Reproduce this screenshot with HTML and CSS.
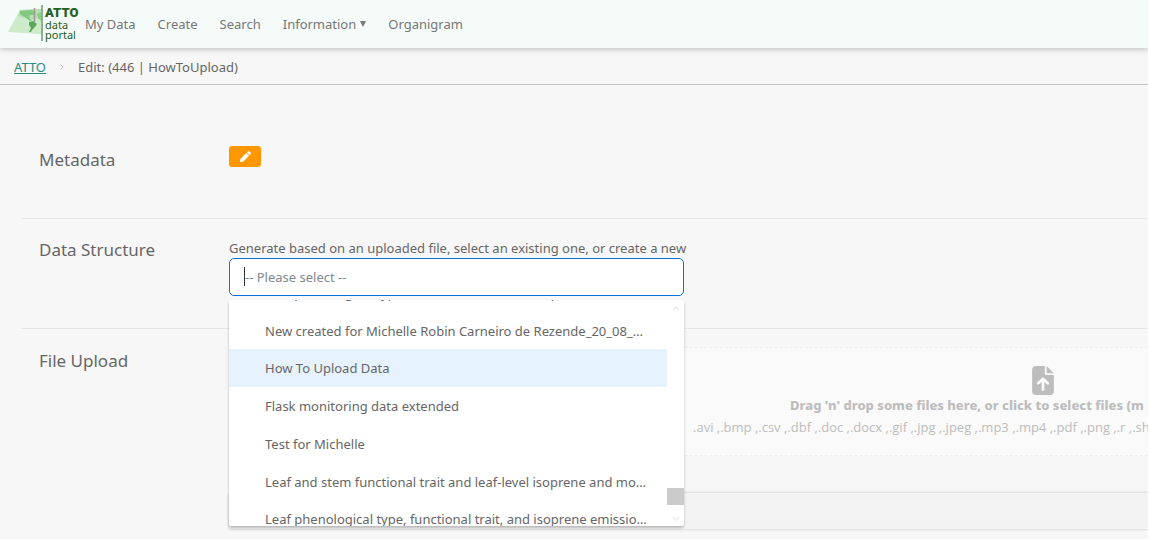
FILE: index.html
```html
<!DOCTYPE html>
<html lang="en">
<head>
<meta charset="utf-8">
<title>ATTO data portal - Edit</title>
<link rel="stylesheet" href="styles.css">
</head>
<body>
<div class="page">
  <header class="navbar">
    <a class="brand" href="#" aria-label="ATTO data portal">
      <svg class="brand-map" viewBox="0 0 36 38" aria-hidden="true">
        <path d="M12 5 33 4V29L0 27Z" fill="#cdebca"/>
        <path d="M12 5 33 4V12L24 15 10 11Z" fill="#b5dfb2"/>
        <path d="M12 6 24 5 28 8 25 10 22 10 21 13 24 15 22 16 18 13 12 9Z" fill="#84c880"/>
        <path d="M21 17 25 16 29 19 27 22 24 25 23 27 21 27 23 23 21 20Z" fill="#5aa85a"/>
        <path d="M29 9 33 7V16L30 13Z" fill="#8ccd88"/>
        <path d="M26.500 3V17" stroke="#a79598" stroke-width="1.500"/>
        <path d="M34 0V36" stroke="#6b9a6e" stroke-width="1.500"/>
      </svg>
      <span class="brand-text"><strong>ATTO</strong><span>data</span><span>portal</span></span>
    </a>
    <nav class="menu">
      <a href="#">My Data</a>
      <a href="#">Create</a>
      <a href="#">Search</a>
      <a href="#">Information<svg class="caret" viewBox="0 0 6 6" aria-hidden="true"><path d="M0 0H6L3 6Z" fill="currentColor"/></svg></a>
      <a href="#">Organigram</a>
    </nav>
  </header>
  <nav class="breadcrumb" aria-label="Breadcrumb">
    <a href="#">ATTO</a>
    <svg class="chevron" viewBox="0 0 4 6" aria-hidden="true"><path d="M.5.5 3 3 .5 5.500" fill="none" stroke="#c5c5c5"/></svg>
    <span>Edit: (446 | HowToUpload)</span>
  </nav>
  <main class="content">
    <section class="row">
      <h2>Metadata</h2>
      <div class="field">
        <button class="edit" type="button" aria-label="Edit metadata">
          <svg viewBox="0 0 512 512" aria-hidden="true"><path fill="#fff" d="M290 93 419 222 143 498 28 511C12 512-1 499 1 484L14 369ZM493 75 437 19C419 1 389 1 371 19L313 70 442 199 493 141C512 123 512 93 493 75Z"/></svg>
        </button>
      </div>
    </section>
    <section class="row">
      <h2>Data Structure</h2>
      <div class="field select-field">
        <label for="structure">Generate based on an uploaded file, select an existing one, or create a new</label>
        <div class="combo">
          <input id="structure" type="text" placeholder="-- Please select --">
          <span class="text-cursor"></span>
          <div class="dropdown">
            <ul class="options">
              <li>Leaf phenological type, functional trait, and isoprene emission capacity</li>
              <li>New created for Michelle Robin Carneiro de Rezende_20_08_2024</li>
              <li class="active">How To Upload Data</li>
              <li>Flask monitoring data extended</li>
              <li>Test for Michelle</li>
              <li>Leaf and stem functional trait and leaf-level isoprene and monoterpene</li>
              <li>Leaf phenological type, functional trait, and isoprene emission capacity</li>
            </ul>
            <div class="scrollbar">
              <svg viewBox="0 0 8 5" aria-hidden="true"><path d="M1 4 4 1 7 4" fill="none" stroke="#f0f0f0" stroke-width="2"/></svg>
              <span class="thumb"></span>
              <svg viewBox="0 0 8 5" aria-hidden="true"><path d="M1 1 4 4 7 1" fill="none" stroke="#f0f0f0" stroke-width="2"/></svg>
            </div>
          </div>
        </div>
      </div>
    </section>
    <section class="row upload-row">
      <h2>File Upload</h2>
      <div class="upload">
        <div class="dropzone">
          <svg class="file-icon" viewBox="0 0 384 512" aria-hidden="true"><path fill="#bdbdbd" d="M224 136V0H64C29 0 0 29 0 64V448C0 483 29 512 64 512H320C355 512 384 483 384 448V160H248C235 160 224 149 224 136Z"/><path fill="#bdbdbd" d="M256 0V128H384Z"/><path d="M108 304 192 226 276 304M192 235V416" fill="none" stroke="#fafafa" stroke-width="48" stroke-linecap="round"/></svg>
          <strong>Drag 'n' drop some files here, or click to select files (m</strong>
          <span>.avi ,.bmp ,.csv ,.dbf ,.doc ,.docx ,.gif ,.jpg ,.jpeg ,.mp3 ,.mp4 ,.pdf ,.png ,.r ,.sh</span>
        </div>
        <div class="file-list"></div>
      </div>
    </section>
  </main>
</div>
</body>
</html>
```
FILE: styles.css
```css
* { box-sizing: border-box; }
body {
  margin: 0;
  padding: 0 2px 2px 0;
  min-height: 100vh;
  display: flex;
  background: #fff;
  color: #666;
  font: 13px/20px "Noto Sans", "Open Sans", sans-serif;
}
.page { flex: 1; min-width: 0; background: #f7f7f7; overflow: hidden; }
.navbar {
  position: relative;
  display: flex;
  align-items: center;
  height: 48px;
  padding-left: 8px;
  background: #f5fbf9;
  box-shadow: 0 1px 6px rgba(0, 0, 0, .25);
}
.brand { display: flex; gap: 1px; margin-right: 7px; color: #24601f; text-decoration: none; }
.brand-map { width: 36px; height: 38px; }
.brand-text { display: flex; flex-direction: column; width: 33px; font: 11px/10px "Noto Sans", sans-serif; }
.brand-text strong { font: 900 13px/15px Roboto, "Open Sans", sans-serif; }
.menu { display: flex; gap: 22px; }
.menu a { color: #777; text-decoration: none; }
.caret { width: 6px; height: 6px; margin-left: 4px; vertical-align: 2px; }
.breadcrumb {
  display: flex;
  align-items: center;
  height: 37px;
  padding: 2px 0 0 14px;
  border-bottom: 1px solid #c4c4c4;
}
.breadcrumb a { color: #2c8c7c; }
.chevron { width: 4px; height: 6px; margin: 0 14px; }
.content { padding: 43px 0 0 21px; }
.row { display: flex; align-items: flex-start; height: 110px; padding: 18px 0 0 18px; border-top: 1px solid #e5e5e5; }
.row:first-child { height: 90px; padding-top: 17px; border-top-color: transparent; }
h2 { flex: none; width: 190px; margin: 0; font-size: 17px; line-height: 26px; font-weight: 400; }
.row:first-child h2, .upload-row h2 { line-height: 28px; }
.edit {
  display: flex;
  align-items: center;
  justify-content: center;
  width: 32px;
  height: 21px;
  padding: 0;
  border: 0;
  border-radius: 3px;
  background: #ff9800;
}
.edit svg { width: 11px; height: 11px; }
.select-field { width: 455px; }
.select-field label { display: block; height: 21px; line-height: 22px; white-space: nowrap; }
.combo { position: relative; }
.combo input {
  display: block;
  width: 100%;
  height: 38px;
  padding: 0 15px;
  border: 1px solid #0d6fdc;
  border-radius: 5px;
  background: #fff;
  color: #666;
  font: inherit;
}
.combo input::placeholder { color: #808890; opacity: 1; }
.text-cursor { position: absolute; left: 15px; top: 9px; width: 1px; height: 19px; background: #333; }
.dropdown {
  position: absolute;
  z-index: 2;
  top: 42px;
  left: 0;
  right: 0;
  display: flex;
  height: 226px;
  overflow: hidden;
  border-radius: 3px;
  background: #fff;
}
.combo::after {
  content: "";
  position: absolute;
  z-index: 1;
  top: 42px;
  left: 0;
  right: 0;
  height: 226px;
  border-radius: 3px;
  box-shadow: 0 2px 3px rgba(0, 0, 0, .25);
}
.options {
  flex: 1;
  min-width: 0;
  display: grid;
  grid-auto-rows: 1fr;
  height: 264px;
  margin: -26px 0 0;
  padding: 0;
  list-style: none;
}
.options li {
  padding: 0 20px 0 36px;
  line-height: 38px;
  overflow: hidden;
  text-overflow: ellipsis;
  white-space: nowrap;
}
.options .active { background: #e6f2fe; }
.scrollbar { display: flex; flex-direction: column; align-items: center; width: 17px; padding: 6px 0 5px; }
.scrollbar svg { width: 8px; height: 5px; }
.thumb { width: 17px; height: 17px; margin: auto 0 11px; background: #cbcbcb; }
.upload-row { height: auto; padding-right: 0; }
.upload { flex: 1; min-width: 0; }
.dropzone {
  display: flex;
  flex-direction: column;
  height: 109px;
  padding: 18px 0 0 463px;
  overflow: hidden;
  border: 1px dashed #eee;
  border-right: 0;
  background: #fafafa;
  color: #bdbdbd;
  font-family: "Open Sans", "Noto Sans", sans-serif;
  line-height: 22px;
  white-space: nowrap;
}
.dropzone strong { margin-left: 97px; font-family: "Noto Sans", sans-serif; font-weight: 800; line-height: 21px; }
.file-icon { width: 22px; height: 29px; margin-left: 339px; }
.file-list { height: 36px; margin-top: 37px; background: #f3f3f3; box-shadow: 0 0 3px rgba(0, 0, 0, .2); }
```
